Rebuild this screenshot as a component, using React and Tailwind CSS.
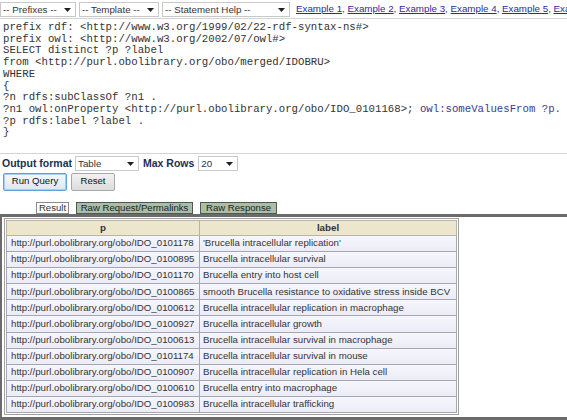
import React from "react";

const rows = [
  ["http://purl.obolibrary.org/obo/IDO_0101178", "'Brucella intracellular replication'"],
  ["http://purl.obolibrary.org/obo/IDO_0100895", "Brucella intracellular survival"],
  ["http://purl.obolibrary.org/obo/IDO_0101170", "Brucella entry into host cell"],
  ["http://purl.obolibrary.org/obo/IDO_0100865", "smooth Brucella resistance to oxidative stress inside BCV"],
  ["http://purl.obolibrary.org/obo/IDO_0100612", "Brucella intracellular replication in macrophage"],
  ["http://purl.obolibrary.org/obo/IDO_0100927", "Brucella intracellular growth"],
  ["http://purl.obolibrary.org/obo/IDO_0100613", "Brucella intracellular survival in macrophage"],
  ["http://purl.obolibrary.org/obo/IDO_0101174", "Brucella intracellular survival in mouse"],
  ["http://purl.obolibrary.org/obo/IDO_0100907", "Brucella intracellular replication in Hela cell"],
  ["http://purl.obolibrary.org/obo/IDO_0100610", "Brucella entry into macrophage"],
  ["http://purl.obolibrary.org/obo/IDO_0100983", "Brucella intracellular trafficking"],
];

function Arrow() {
  return (
    <svg width="7" height="4" viewBox="0 0 7 4" className="shrink-0">
      <path d="M0 0 L7 0 L3.5 4 Z" fill="#222" />
    </svg>
  );
}

function Select({ label, w }) {
  return (
    <div
      className={`shrink-0 flex items-center justify-between h-[15px] border border-[#c8c8c8] bg-white pl-[2px] pr-[4px] text-[9.75px] text-[#333] ${w}`}
    >
      <span className="leading-none">{label}</span>
      <Arrow />
    </div>
  );
}

const codeLines = [
  "prefix rdf: <http://www.w3.org/1999/02/22-rdf-syntax-ns#>",
  "prefix owl: <http://www.w3.org/2002/07/owl#>",
  "SELECT distinct ?p ?label",
  "from <http://purl.obolibrary.org/obo/merged/IDOBRU>",
  "WHERE",
  "{",
  "?n rdfs:subClassOf ?n1 .",
  null,
  "?p rdfs:label ?label .",
  "}",
];

export default function App() {
  return (
    <div className="w-[567px] h-[420px] overflow-hidden bg-white font-['Liberation_Sans',Arial,sans-serif] text-[#222]">
      {/* top toolbar */}
      <div className="flex items-center h-[18px] pt-[1px] gap-[3px] whitespace-nowrap overflow-hidden">
        <Select label="-- Prefixes --" w="w-[76px]" />
        <Select label="-- Template --" w="w-[80px]" />
        <Select label="-- Statement Help --" w="w-[128px]" />
        <div className="shrink-0 ml-[3px] text-[9.75px] text-[#2b2b9c]">
          <span className="underline">Example 1</span>,{" "}
          <span className="underline">Example 2</span>,{" "}
          <span className="underline">Example 3</span>,{" "}
          <span className="underline">Example 4</span>,{" "}
          <span className="underline">Example 5</span>,{" "}
          <span className="underline">Example 6</span>
        </div>
      </div>

      {/* textarea */}
      <div className="h-[136px] border-y border-[#d4d4d8] pt-[3px] pl-[3px] font-['Liberation_Mono','Courier_New',monospace] text-[10.7px] leading-[11.7px] text-[#333] whitespace-pre overflow-hidden">
        {codeLines.map((l, i) =>
          l === null ? (
            <div key={i}>
              {"?n1 owl:onProperty <http://purl.obolibrary.org/obo/IDO_0101168>; "}
              <span className="text-[#3b3b8f]">owl:someValuesFrom ?p.</span>
            </div>
          ) : (
            <div key={i}>{l}</div>
          )
        )}
      </div>

      {/* output format */}
      <div className="flex items-center h-[17px] mt-[1px] whitespace-nowrap">
        <span className="ml-[2px] font-bold text-[10.5px] text-[#1c2e52]">Output format</span>
        <div className="ml-[3px]">
          <Select label="Table" w="w-[64px]" />
        </div>
        <span className="ml-[4px] font-bold text-[10.5px] text-[#1c2e52]">Max Rows</span>
        <div className="ml-[4px]">
          <Select label="20" w="w-[40px]" />
        </div>
      </div>

      {/* buttons */}
      <div className="flex items-center gap-[4px] pl-[3px] h-[19px]">
        <div className="w-[64px] h-[18px] flex items-center justify-center rounded-[2px] border border-[#5fa2dd] bg-gradient-to-b from-[#f4f8fc] to-[#dce8f4] text-[9.6px] text-[#111] shadow-[inset_0_0_0_1px_#a9cdf0]">
          Run Query
        </div>
        <div className="w-[44px] h-[18px] flex items-center justify-center rounded-[2px] border border-[#a8a8a8] bg-gradient-to-b from-[#f2f2f2] to-[#dcdcdc] text-[9.6px] text-[#111]">
          Reset
        </div>
      </div>

      {/* tabs */}
      <div className="flex items-end h-[23px] pl-[36px] gap-[7px] text-[9.6px]">
        <div className="h-[12px] w-[33px] flex items-center justify-center border border-[#888] bg-white text-[#333] leading-none">
          Result
        </div>
        <div className="h-[12px] w-[117px] flex items-center justify-center border border-[#4d5a4d] bg-[#a9bda9] text-[#222] leading-none">
          Raw Request/Permalinks
        </div>
        <div className="h-[12px] w-[77px] flex items-center justify-center border border-[#4d5a4d] bg-[#a9bda9] text-[#222] leading-none">
          Raw Response
        </div>
      </div>

      {/* panel */}
      <div className="border-t-[3px] border-l-[2px] border-b-[3px] border-[#6b6b6b] pt-[1px] pl-[2px] pb-[2px] w-[600px]">
        <div className="w-[455px] border border-[#a0a0a0] p-[1px]">
          <div className="flex h-[16px] bg-[#ebe6cc] border border-[#b9b5a2] font-bold text-[9.75px] text-[#333]">
            <div className="w-[193px] flex items-center justify-center border-r border-[#b9b5a2]">p</div>
            <div className="flex-1 flex items-center justify-center">label</div>
          </div>
          {rows.map(([p, l], i) => (
            <div
              key={i}
              className="flex h-[16.1px] border-x border-b border-[#a6a6b0] bg-gradient-to-b from-[#f6f6fd] to-[#ececf8] text-[9.7px] text-[#333] whitespace-nowrap"
            >
              <div className="w-[193px] flex items-center pl-[4px] border-r border-[#a6a6b0]">{p}</div>
              <div className="flex-1 flex items-center pl-[3px]">{l}</div>
            </div>
          ))}
        </div>
      </div>
    </div>
  );
}
